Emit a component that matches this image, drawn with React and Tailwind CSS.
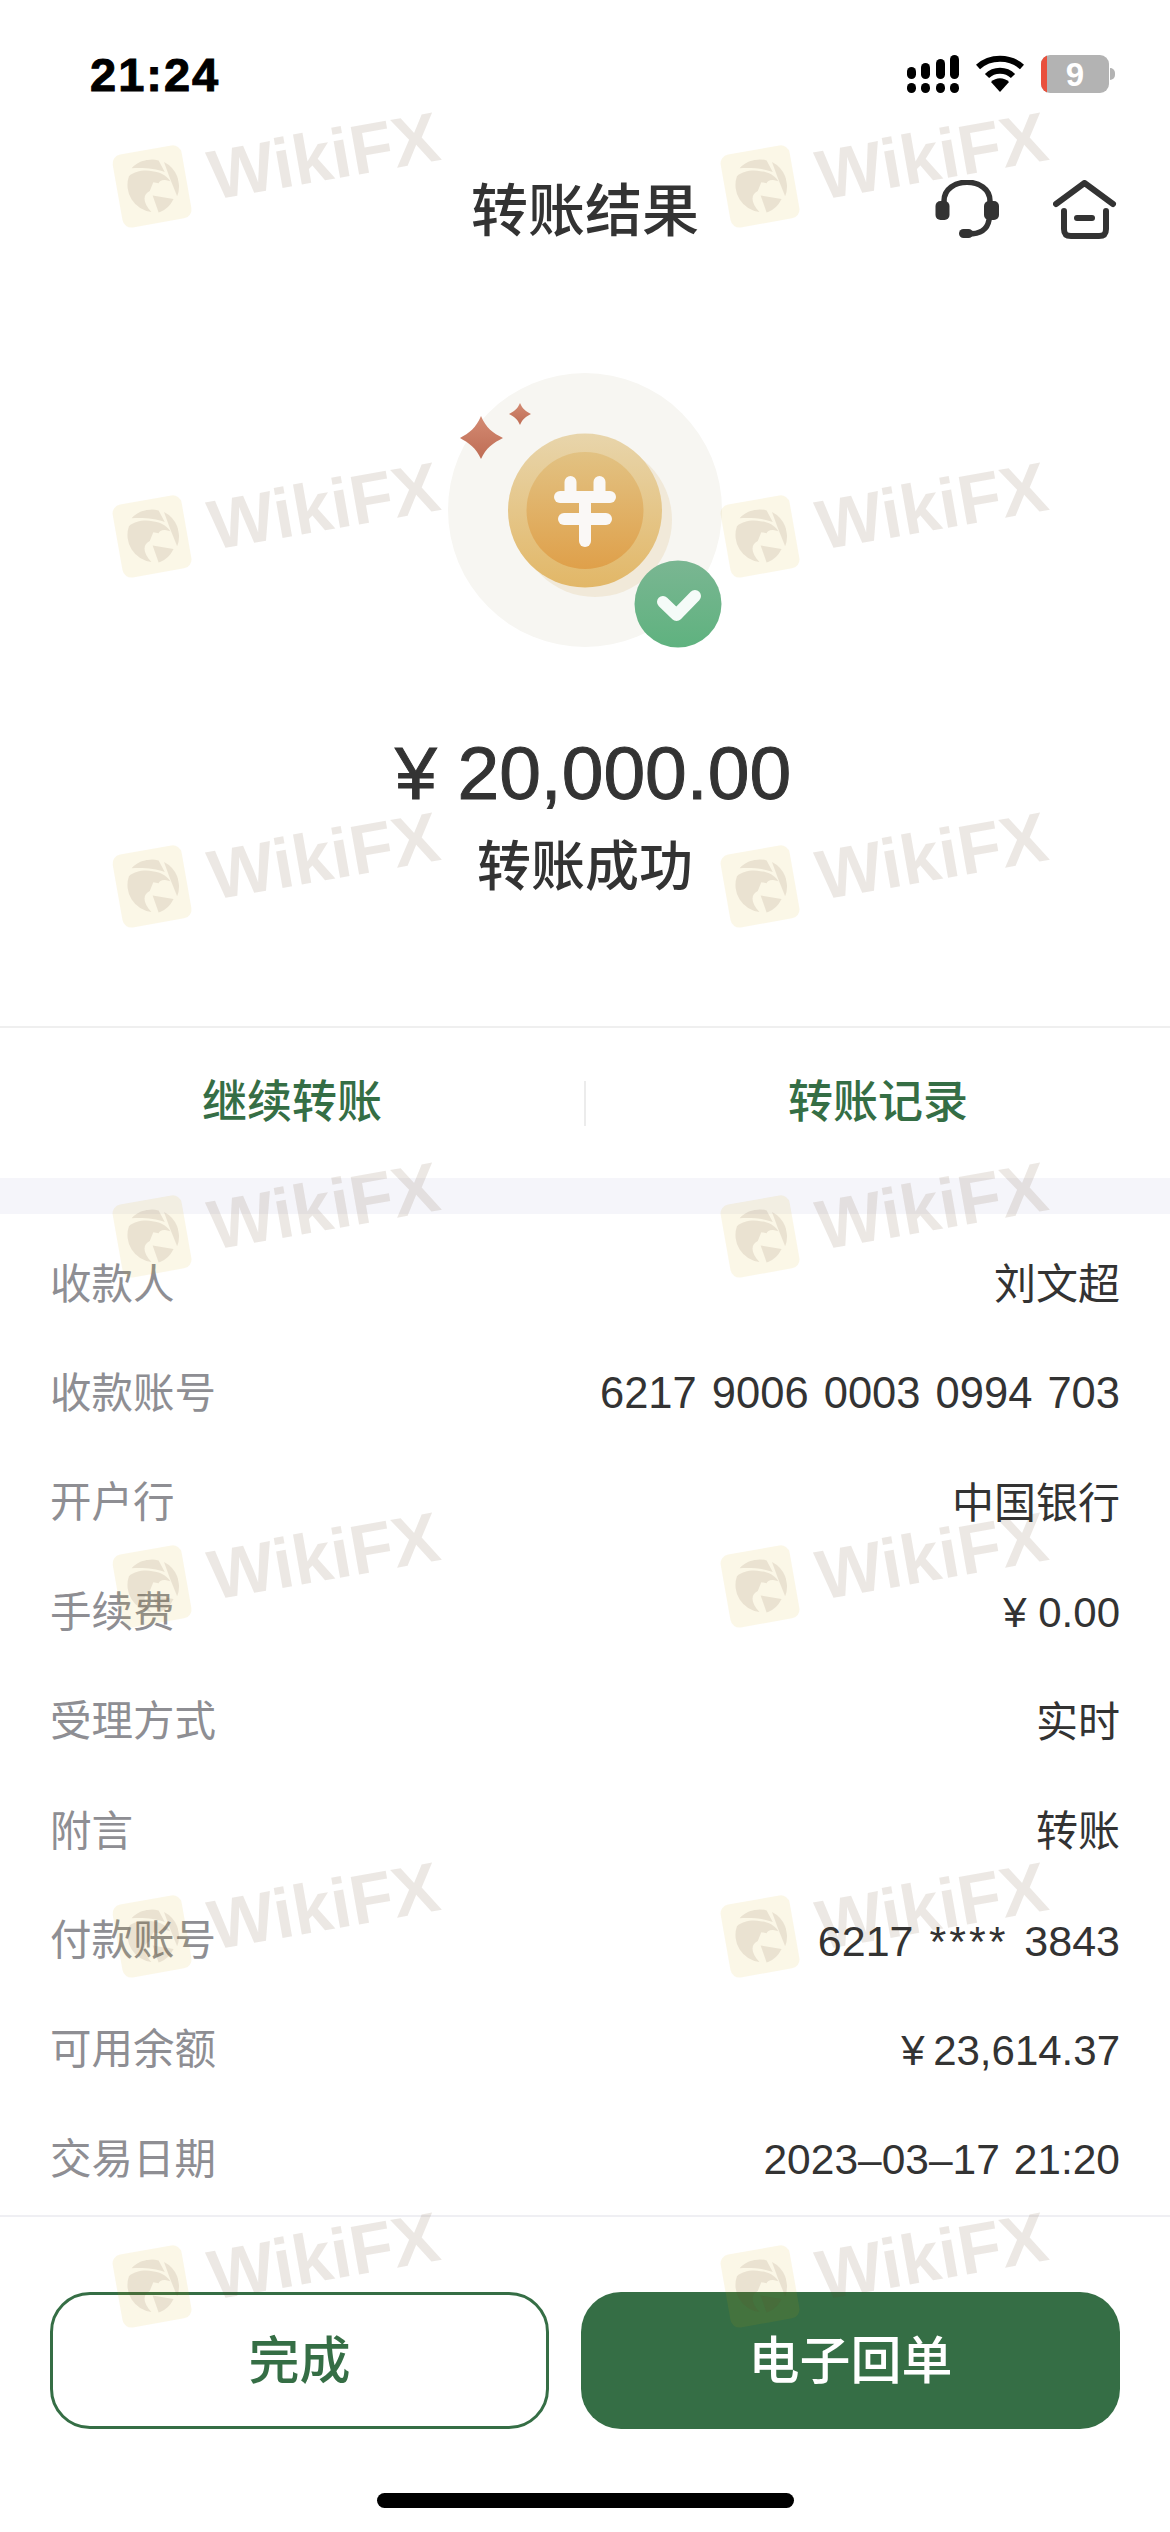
const rows = [
  { label: "收款人", value: "刘文超" },
  { label: "收款账号", value: "6217 9006 0003 0994 703", cls: "text-[43.5px] [word-spacing:3px]" },
  { label: "开户行", value: "中国银行" },
  { label: "手续费", value: "¥ 0.00" },
  { label: "受理方式", value: "实时" },
  { label: "附言", value: "转账" },
  {
    label: "付款账号",
    value: (
      <>
        6217 <span className="tracking-[3px]">****</span> 3843
      </>
    ),
    cls: "text-[43px] [word-spacing:4px]",
  },
  { label: "可用余额", value: "¥ 23,614.37", cls: "[word-spacing:-3px]" },
  { label: "交易日期", value: "2023–03–17 21:20", cls: "text-[42.5px] [word-spacing:2px]" },
];

function SignalIcon() {
  return (
    <svg width="52" height="38" viewBox="0 0 52 38" fill="#000">
      <rect x="0" y="12" width="9" height="12" rx="4.5" />
      <rect x="14" y="8" width="9" height="16" rx="4.5" />
      <rect x="29" y="4" width="9" height="20" rx="4.5" />
      <rect x="43" y="0" width="9" height="24" rx="4.5" />
      <rect x="0" y="28" width="9" height="10" rx="4.5" />
      <rect x="14" y="28" width="9" height="10" rx="4.5" />
      <rect x="29" y="28" width="9" height="10" rx="4.5" />
      <rect x="43" y="28" width="9" height="10" rx="4.5" />
    </svg>
  );
}

function WifiIcon() {
  return (
    <svg width="48" height="38" viewBox="0 0 48 38" fill="none" stroke="#000" strokeWidth="6">
      <path d="M2 12 C14 1 34 1 46 12" />
      <path d="M11 21 C18 14 30 14 37 21" />
      <path d="M15 27 L24 37 L33 27 C28 22 20 22 15 27 Z" fill="#000" stroke="none" />
    </svg>
  );
}

function Battery() {
  return (
    <div className="flex items-center gap-[1px]">
      <div className="relative w-[68px] h-[38px] rounded-[9px] bg-[#b3b3b3] overflow-hidden flex items-center justify-center">
        <div className="absolute left-0 top-0 bottom-0 w-[6px] bg-[#e9503c]" />
        <span className="text-white text-[33px] font-bold leading-none">9</span>
      </div>
      <div className="w-[5px] h-[12px] rounded-r-full bg-[#b3b3b3]" />
    </div>
  );
}

function HeadsetIcon() {
  return (
    <svg width="64" height="60" viewBox="0 0 64 60" fill="none" stroke="#333" strokeWidth="5.5" strokeLinecap="round">
      <path d="M9 21 C9 -4 55 -4 55 21" />
      <rect x="0.5" y="21" width="14" height="19" rx="5" fill="#333" stroke="none" />
      <rect x="49" y="21" width="15" height="19" rx="5" fill="#333" stroke="none" />
      <path d="M54 40 C52 51 44 54 33 54" />
      <rect x="24" y="49" width="14" height="9" rx="4.5" fill="#333" stroke="none" />
    </svg>
  );
}

function HomeIcon() {
  return (
    <svg width="64" height="60" viewBox="0 0 64 60" fill="none" stroke="#333" strokeWidth="6" strokeLinecap="round" strokeLinejoin="round">
      <path d="M3 24 L31.5 3 L60 24" />
      <path d="M11 31 V49 C11 54 13 56 18 56 H46 C51 56 53 54 53 49 V31" />
      <path d="M24 38 H39" />
    </svg>
  );
}

function SuccessArt() {
  return (
    <svg width="370" height="340" viewBox="400 340 370 340">
      <defs>
        <linearGradient id="coinOuter" x1="0" y1="0" x2="0" y2="1">
          <stop offset="0" stopColor="#e8d5ab" />
          <stop offset="1" stopColor="#e2b767" />
        </linearGradient>
        <linearGradient id="coinInner" x1="0" y1="0" x2="0" y2="1">
          <stop offset="0" stopColor="#e2c283" />
          <stop offset="1" stopColor="#dfa04a" />
        </linearGradient>
        <linearGradient id="badge" x1="0" y1="0" x2="0" y2="1">
          <stop offset="0" stopColor="#7ab692" />
          <stop offset="1" stopColor="#5fb27f" />
        </linearGradient>
        <linearGradient id="spark" x1="0" y1="0" x2="0" y2="1">
          <stop offset="0" stopColor="#d38a72" />
          <stop offset="1" stopColor="#bf6d55" />
        </linearGradient>
      </defs>
      <circle cx="585" cy="510" r="137" fill="#f7f6f2" />
      <circle cx="595" cy="520" r="77" fill="#f1e9d9" />
      <circle cx="585" cy="510.5" r="77" fill="url(#coinOuter)" />
      <circle cx="585" cy="510.5" r="58.5" fill="url(#coinInner)" />
      <g stroke="#faf8f6" strokeWidth="12" strokeLinecap="round" fill="none">
        <path d="M570.5 482 V497" />
        <path d="M599.5 482 V497" />
        <path d="M560 497 H610" />
        <path d="M564 519 H606" />
        <path d="M585 497 V541" />
      </g>
      <path d="M481 416 C486 428 493 433 503 438 C493 443 486 448 481 459 C476 448 469 443 460 438 C469 433 476 428 481 416 Z" fill="url(#spark)" />
      <path d="M520 403 C522.5 409 526 411.5 531 414 C526 416.5 522.5 419 520 425 C517.5 419 514 416.5 509 414 C514 411.5 517.5 409 520 403 Z" fill="url(#spark)" />
      <circle cx="678" cy="604" r="43.5" fill="url(#badge)" />
      <path d="M663 602 L676.5 615 L695 596" fill="none" stroke="#f5fbf8" strokeWidth="12" strokeLinecap="round" strokeLinejoin="round" />
    </svg>
  );
}

function Watermark() {
  return (
    <div className="flex items-center gap-[23px] h-[76px] w-[340px] -rotate-[10deg]">
      <div className="w-[70px] h-[74px] shrink-0 rounded-[9px] bg-[#d7a50518] flex items-center justify-center">
        <svg width="54" height="54" viewBox="0 0 54 54" fill="#6442211c">
          <path d="M10 5.5 A27 27 0 0 1 38 2.5 L42 15 C34 10 22 7 10 5.5 Z" />
          <path d="M43 5 A27 27 0 0 1 50 41 L46 22 Z" />
          <path d="M6 13 C12 9 22 9 30 12 C37 14 43 18 46 25 L41 23 C38 22 35 23 34 25 L29 23 L24 31 C16 33 15 42 22 52 A27 27 0 0 1 6 13 Z" />
          <path d="M26 36 L46 43 A27 27 0 0 1 29 54 Z" />
        </svg>
      </div>
      <span className="text-[70px] leading-none font-bold text-[#6442211f]">WikiFX</span>
    </div>
  );
}

export default function App() {
  return (
    <div className="relative w-full h-[2532px] overflow-hidden bg-white text-[#333] font-['Liberation_Sans','Noto_Sans_CJK_SC',sans-serif]">
      {/* status bar */}
      <div className="h-[140px] pl-[90px] pr-[55px] flex items-start justify-between pt-[55px]">
        <span className="text-[47px] leading-[40px] font-bold tracking-[2px] text-black [-webkit-text-stroke:1px_#000]">21:24</span>
        <div className="flex items-center gap-[17px]">
          <SignalIcon />
          <WifiIcon />
          <Battery />
        </div>
      </div>

      {/* header */}
      <div className="relative h-[140px] flex items-center justify-center">
        <h1 className="text-[57px] font-medium leading-none pt-[3px]">转账结果</h1>
        <div className="absolute right-[53px] top-[40px] flex gap-[54px]">
          <HeadsetIcon />
          <HomeIcon />
        </div>
      </div>

      {/* result */}
      <div className="flex flex-col items-center pt-[60px] h-[746px]">
        <SuccessArt />
        <div className="mt-[53px] pl-[16px] text-[75px] leading-[80px] [-webkit-text-stroke:1px_#333]">¥ 20,000.00</div>
        <div className="mt-[19px] text-[54px] leading-[70px] font-medium">转账成功</div>
      </div>

      {/* actions */}
      <div className="h-[152px] border-t-2 border-[#efefef] flex items-center">
        <div className="flex-1 text-center text-[45px] font-medium text-[#356e45]">继续转账</div>
        <div className="w-[2px] h-[45px] bg-[#ececec]" />
        <div className="flex-1 text-center text-[45px] font-medium text-[#356e45]">转账记录</div>
      </div>
      <div className="h-[36px] bg-[#f5f5fa]" />

      {/* detail rows */}
      <div className="pt-[16px] px-[50px]">
        {rows.map((row) => (
          <div key={row.label} className="h-[109.4px] flex items-center justify-between text-[42px]">
            <span className="text-[41.5px] text-[#8e8e93]">{row.label}</span>
            <span className={row.cls}>{row.value}</span>
          </div>
        ))}
      </div>

      {/* footer */}
      <div className="absolute left-0 right-0 bottom-0 h-[317px] border-t-2 border-[#efeff3] pt-[75px] px-[50px]">
        <div className="flex gap-[32px]">
          <button className="w-[499px] h-[137px] pt-[4px] rounded-[40px] border-[3px] border-[#356e45] text-[#356e45] text-[51px] font-medium">完成</button>
          <button className="flex-1 h-[137px] pt-[4px] rounded-[40px] bg-[#356e45] text-white text-[51px] font-medium">电子回单</button>
        </div>
        <div className="mt-[64px] mx-auto w-[417px] h-[15px] rounded-full bg-black" />
      </div>

      {/* watermark overlay */}
      <div className="absolute inset-0 pointer-events-none pl-[115px] pt-[125px] grid grid-cols-[repeat(2,608px)] auto-rows-[350px]">
        {Array.from({ length: 14 }).map((_, i) => (
          <Watermark key={i} />
        ))}
      </div>
    </div>
  );
}
